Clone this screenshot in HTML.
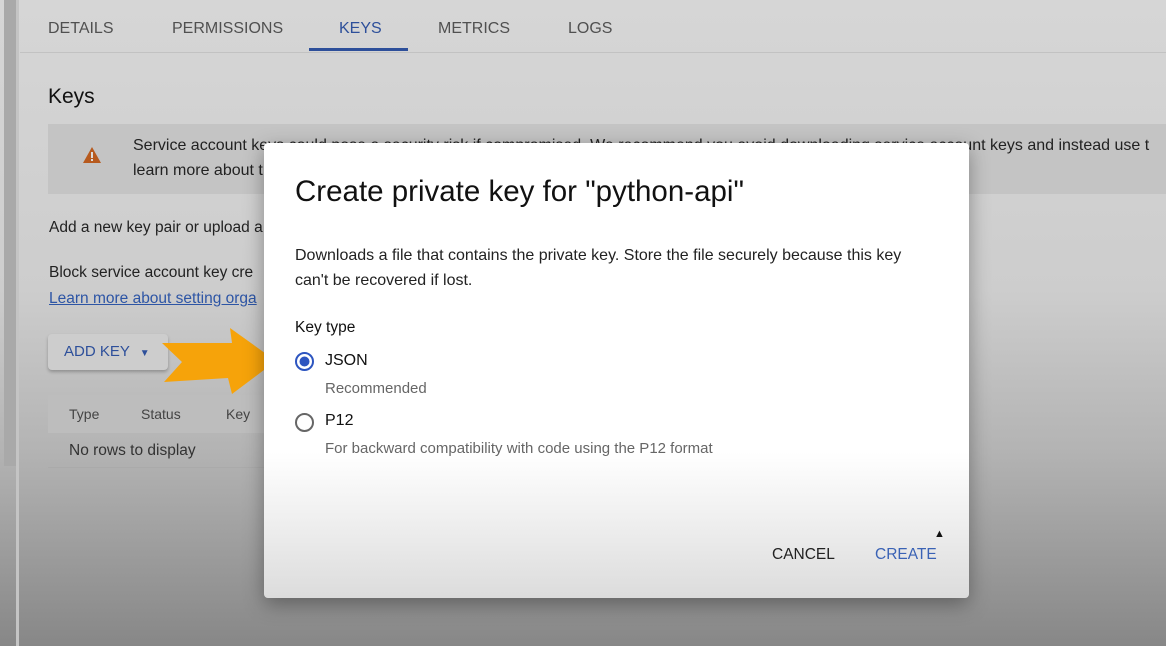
<!DOCTYPE html>
<html><head><meta charset="utf-8"><style>
*{margin:0;padding:0;box-sizing:border-box}
body{width:1166px;height:646px;overflow:hidden;position:relative;font-family:"Liberation Sans",Arial,sans-serif;background:linear-gradient(180deg,#d6d6d6 0%,#cdcdcd 45%,#b3b3b3 70%,#878787 100%);color:#222}
.abs{position:absolute;white-space:nowrap}
.sb{position:absolute;left:4px;top:0;width:12px;height:466px;background:#a9a9a9}
.sb2{position:absolute;left:16px;top:0;width:3px;height:646px;background:#c4c4c4}
.tab{position:absolute;top:20px;font-size:16px;color:#505050}
.warn{position:absolute;left:48px;top:124px;width:1118px;height:70px;background:#c4c4c4}
.dlg{position:absolute;left:264px;top:143px;width:705px;height:455px;border-radius:4px;background:linear-gradient(180deg,#fff 0%,#fff 68%,#f0f0f0 82%,#dcdcdc 100%);box-shadow:0 6px 20px rgba(0,0,0,.35)}
.dlg .abs{color:#222}
</style></head><body>
<div class="sb"></div><div class="sb2"></div>
<div class="abs" style="left:20px;top:52px;width:1146px;height:1px;background:#c2c2c2"></div>
<div class="tab" style="left:48px">DETAILS</div>
<div class="tab" style="left:172px">PERMISSIONS</div>
<div class="tab" style="left:339px;color:#2d4f9a">KEYS</div>
<div class="abs" style="left:309px;top:48px;width:99px;height:3px;background:#2d4f9a"></div>
<div class="tab" style="left:438px">METRICS</div>
<div class="tab" style="left:568px">LOGS</div>
<div class="abs" style="left:48px;top:85px;font-size:21px;color:#111">Keys</div>
<div class="warn"></div>
<svg class="abs" style="left:82px;top:146px" width="20" height="18" viewBox="0 0 20 18"><path d="M10 1 L19 17 L1 17 Z" fill="#b75a1e"/><rect x="9" y="6" width="2" height="6" fill="#ddd"/><rect x="9" y="13" width="2" height="2" fill="#ddd"/></svg>
<div class="abs" style="left:133px;top:137px;font-size:16px">Service account keys could pose a security risk if compromised. We recommend you avoid downloading service account keys and instead use t</div>
<div class="abs" style="left:133px;top:162px;font-size:16px">learn more about t</div>
<div class="abs" style="left:49px;top:219px;font-size:15.5px">Add a new key pair or upload a</div>
<div class="abs" style="left:49px;top:264px;font-size:15.5px">Block service account key cre</div>
<div class="abs" style="left:49px;top:290px;font-size:15.5px;color:#2d55a5;text-decoration:underline">Learn more about setting orga</div>
<div class="abs" style="left:48px;top:334px;width:120px;height:36px;border-radius:4px;background:#cdcdcd;box-shadow:0 2px 3px rgba(0,0,0,.25)"></div>
<div class="abs" style="left:64px;top:343px;font-size:15px;color:#2d4f9a">ADD KEY <span style="font-size:10px;margin-left:6px">&#9660;</span></div>
<div class="abs" style="left:48px;top:395px;width:220px;height:38px;background:#bdbdbd"></div>
<div class="abs" style="left:69px;top:406px;font-size:14px;color:#444">Type</div>
<div class="abs" style="left:141px;top:406px;font-size:14px;color:#444">Status</div>
<div class="abs" style="left:226px;top:406px;font-size:14px;color:#444">Key</div>
<div class="abs" style="left:69px;top:442px;font-size:15.5px;color:#333">No rows to display</div>
<div class="abs" style="left:48px;top:467px;width:220px;height:1px;background:#aaa"></div>
<svg class="abs" style="left:160px;top:328px" width="120" height="68" viewBox="0 0 120 68"><path d="M2 15 L72 15 L70 0 L116 33 L72 66 L68 50 L4 54 L22 34 Z" fill="#f6a30a"/></svg>
<div class="dlg">
<div class="abs" style="left:31px;top:32px;font-size:29.5px;color:#111">Create private key for "python-api"</div>
<div class="abs" style="left:31px;top:100px;font-size:16px;line-height:25px;white-space:normal;width:625px">Downloads a file that contains the private key. Store the file securely because this key can't be recovered if lost.</div>
<div class="abs" style="left:31px;top:176px;font-size:15.5px;color:#111">Key type</div>
<svg class="abs" style="left:30px;top:208px" width="21" height="21"><circle cx="10.5" cy="10.5" r="8.5" fill="none" stroke="#2d55c0" stroke-width="2"/><circle cx="10.5" cy="10.5" r="5" fill="#2d55c0"/></svg>
<div class="abs" style="left:61px;top:209px;font-size:16px;color:#111">JSON</div>
<div class="abs" style="left:61px;top:237px;font-size:15px;color:#666">Recommended</div>
<svg class="abs" style="left:30px;top:269px" width="21" height="21"><circle cx="10.5" cy="10.5" r="8.5" fill="none" stroke="#666" stroke-width="2"/></svg>
<div class="abs" style="left:61px;top:269px;font-size:16px;color:#111">P12</div>
<div class="abs" style="left:61px;top:297px;font-size:15px;color:#666">For backward compatibility with code using the P12 format</div>
<div class="abs" style="left:508px;top:403px;font-size:15.5px;color:#222">CANCEL</div>
<div class="abs" style="left:611px;top:403px;font-size:15.5px;color:#3a62b5">CREATE</div>
<div class="abs" style="left:670px;top:385px;font-size:11px;color:#111">&#9650;</div>
</div>
</body></html>
